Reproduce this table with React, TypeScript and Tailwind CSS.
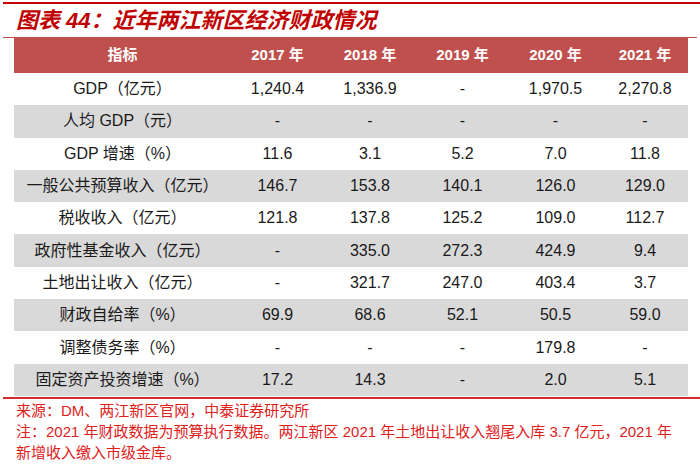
const rows = [
  { label: "GDP（亿元）", values: ["1,240.4", "1,336.9", "-", "1,970.5", "2,270.8"] },
  { label: "人均 GDP（元）", values: ["-", "-", "-", "-", "-"] },
  { label: "GDP 增速（%）", values: ["11.6", "3.1", "5.2", "7.0", "11.8"] },
  { label: "一般公共预算收入（亿元）", values: ["146.7", "153.8", "140.1", "126.0", "129.0"] },
  { label: "税收收入（亿元）", values: ["121.8", "137.8", "125.2", "109.0", "112.7"] },
  { label: "政府性基金收入（亿元）", values: ["-", "335.0", "272.3", "424.9", "9.4"] },
  { label: "土地出让收入（亿元）", values: ["-", "321.7", "247.0", "403.4", "3.7"] },
  { label: "财政自给率（%）", values: ["69.9", "68.6", "52.1", "50.5", "59.0"] },
  { label: "调整债务率（%）", values: ["-", "-", "-", "179.8", "-"] },
  { label: "固定资产投资增速（%）", values: ["17.2", "14.3", "-", "2.0", "5.1"] },
];

const years = ["2017 年", "2018 年", "2019 年", "2020 年", "2021 年"];

const font = "font-['Liberation_Sans','Noto_Sans_CJK_SC',sans-serif]";
const cols = "grid grid-cols-[217px_93px_92px_93px_93px_86px]";

export default function App() {
  return (
    <div className={`w-[700px] h-[465px] bg-white overflow-hidden ${font}`}>
      <div className="mt-[2px] ml-[3px] h-[2px] w-[697px] bg-[#c00000]" />
      <div className="h-[33px] flex items-center pl-[16px] pb-[1px] text-[22px] font-bold italic text-[#c00000]">
        图表 44：近年两江新区经济财政情况
      </div>
      <div className="ml-[3px] h-px w-[694px] bg-[#c0504d]" />

      <div className="ml-[14px] w-[674px]">
        <div className={`${cols} h-[35px] items-center bg-[#c0504d] text-white font-bold text-[15px]`}>
          <div className="text-center">指标</div>
          {years.map((y) => (
            <div key={y} className="text-center">
              {y}
            </div>
          ))}
        </div>
        {rows.map((r, i) => (
          <div
            key={r.label}
            className={`${cols} h-[32.3px] items-center text-[16px] text-[#1a1a1a] ${
              i % 2 === 1 ? "bg-[#d9d9d9]" : "bg-white"
            }`}
          >
            <div className="text-center">{r.label}</div>
            {r.values.map((v, j) => (
              <div key={j} className="text-center">
                {v}
              </div>
            ))}
          </div>
        ))}
      </div>

      <div className="mt-px ml-[3px] h-[2px] w-[697px] bg-[#d42a2a]" />
      <div className="pl-[16px] pt-[1px] text-[15px] leading-[21px] text-[#e0201b]">
        <p>来源：DM、两江新区官网，中泰证券研究所</p>
        <p>
          注：2021 年财政数据为预算执行数据。两江新区 2021 年土地出让收入翘尾入库 3.7 亿元，2021 年
          <br />
          新增收入缴入市级金库。
        </p>
      </div>
    </div>
  );
}
